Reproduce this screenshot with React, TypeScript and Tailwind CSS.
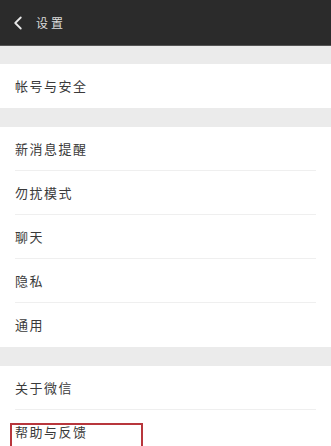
import { ChevronLeft } from 'lucide-react'

const groups = [
  ['帐号与安全'],
  ['新消息提醒', '勿扰模式', '聊天', '隐私', '通用'],
  ['关于微信', '帮助与反馈'],
]

function Row({ label, last, marked }: { label: string; last: boolean; marked?: boolean }) {
  return (
    <div className="relative h-[44px] bg-white">
      <div className="flex h-full items-center px-[15px]">
        <span className="text-[13px] tracking-[1.5px] text-[#3a3a3a]">{label}</span>
      </div>
      {!last && <div className="absolute bottom-0 left-[15px] right-[15px] h-px bg-[#efefef]" />}
      {marked && (
        <div className="absolute left-[10px] top-[13px] h-[40px] w-[133px] border-2 border-[#b8363c]" />
      )}
    </div>
  )
}

export default function App() {
  return (
    <div
      className="h-[446px] w-[331px] overflow-hidden bg-[#ebebeb]"
      style={{ fontFamily: '"Noto Sans CJK SC", "Noto Sans", sans-serif' }}
    >
      <div className="flex h-[46px] items-center bg-[#2b2b2b] border-b border-[#555]">
        <ChevronLeft className="ml-[7px] text-[#e8e8e8]" size={22} strokeWidth={2} />
        <span className="ml-[7px] text-[12px] tracking-[3px] text-[#dcdcdc]">设置</span>
      </div>
      {groups.map((g, gi) => (
        <div key={gi} className={gi === 0 ? 'mt-[18px]' : 'mt-[19px]'}>
          {g.map((label, i) => (
            <Row key={label} label={label} last={i === g.length - 1} marked={label === '帮助与反馈'} />
          ))}
        </div>
      ))}
    </div>
  )
}
